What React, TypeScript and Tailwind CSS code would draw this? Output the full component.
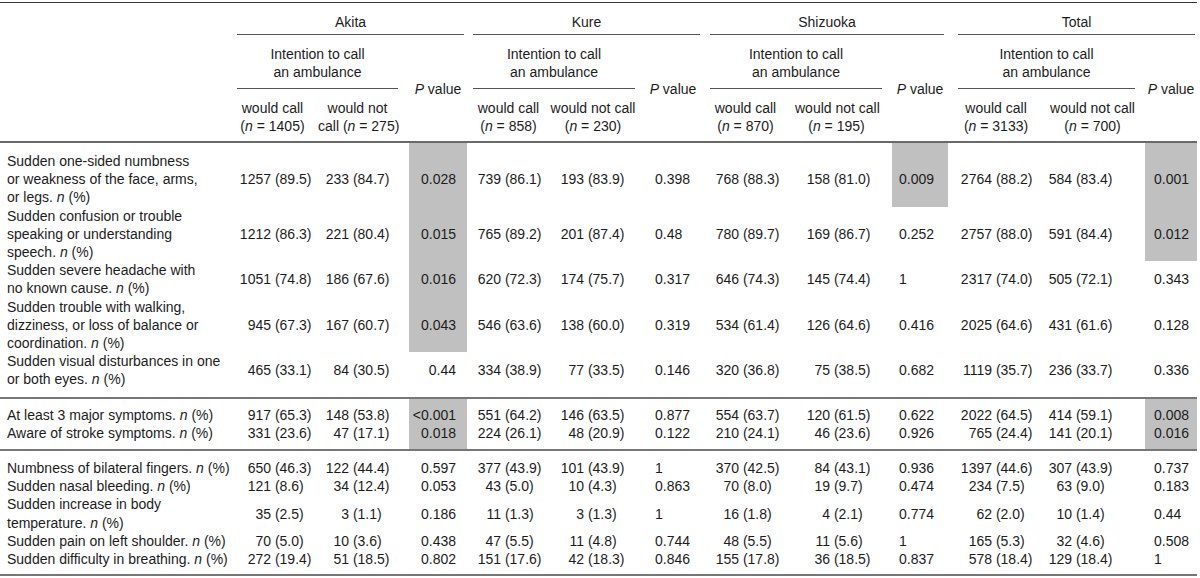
import React from 'react';

type Row = {
  label: React.ReactNode;
  vals: string[];
  shade: [boolean, boolean, boolean]; // Akita, Shizuoka, Total P value
  pt: string;
  pb: string;
  line?: string;
};

const N = () => <i>n</i>;

const ROWS: Row[] = [
  {
    label: (
      <>
        Sudden one-sided numbness
        <br />
        or weakness of the face, arms,
        <br />
        or legs. <N /> (%)
      </>
    ),
    vals: ['1257 (89.5)', '233 (84.7)', '0.028', '739 (86.1)', '193 (83.9)', '0.398', '768 (88.3)', '158 (81.0)', '0.009', '2764 (88.2)', '584 (83.4)', '0.001'],
    shade: [true, true, true],
    pt: 'pt-[9px]',
    pb: 'pb-0',
  },
  {
    label: (
      <>
        Sudden confusion or trouble
        <br />
        speaking or understanding
        <br />
        speech. <N /> (%)
      </>
    ),
    vals: ['1212 (86.3)', '221 (80.4)', '0.015', '765 (89.2)', '201 (87.4)', '0.48', '780 (89.7)', '169 (86.7)', '0.252', '2757 (88.0)', '591 (84.4)', '0.012'],
    shade: [true, false, true],
    pt: 'pt-0',
    pb: 'pb-0',
  },
  {
    label: (
      <>
        Sudden severe headache with
        <br />
        no known cause. <N /> (%)
      </>
    ),
    vals: ['1051 (74.8)', '186 (67.6)', '0.016', '620 (72.3)', '174 (75.7)', '0.317', '646 (74.3)', '145 (74.4)', '1', '2317 (74.0)', '505 (72.1)', '0.343'],
    shade: [true, false, false],
    pt: 'pt-0',
    pb: 'pb-0',
  },
  {
    label: (
      <>
        Sudden trouble with walking,
        <br />
        dizziness, or loss of balance or
        <br />
        coordination. <N /> (%)
      </>
    ),
    vals: ['945 (67.3)', '167 (60.7)', '0.043', '546 (63.6)', '138 (60.0)', '0.319', '534 (61.4)', '126 (64.6)', '0.416', '2025 (64.6)', '431 (61.6)', '0.128'],
    shade: [true, false, false],
    pt: 'pt-0',
    pb: 'pb-0',
  },
  {
    label: (
      <>
        Sudden visual disturbances in one
        <br />
        or both eyes. <N /> (%)
      </>
    ),
    vals: ['465 (33.1)', '84 (30.5)', '0.44', '334 (38.9)', '77 (33.5)', '0.146', '320 (36.8)', '75 (38.5)', '0.682', '1119 (35.7)', '236 (33.7)', '0.336'],
    shade: [false, false, false],
    pt: 'pt-0',
    pb: 'pb-[8px]',
  },
  {
    label: (
      <>
        At least 3 major symptoms. <N /> (%)
      </>
    ),
    vals: ['917 (65.3)', '148 (53.8)', '<0.001', '551 (64.2)', '146 (63.5)', '0.877', '554 (63.7)', '120 (61.5)', '0.622', '2022 (64.5)', '414 (59.1)', '0.008'],
    shade: [true, false, true],
    pt: 'pt-[7px]',
    pb: 'pb-0',
    line: 'border-t-2 border-[#777]',
  },
  {
    label: (
      <>
        Aware of stroke symptoms. <N /> (%)
      </>
    ),
    vals: ['331 (23.6)', '47 (17.1)', '0.018', '224 (26.1)', '48 (20.9)', '0.122', '210 (24.1)', '46 (23.6)', '0.926', '765 (24.4)', '141 (20.1)', '0.016'],
    shade: [true, false, true],
    pt: 'pt-0',
    pb: 'pb-[7px]',
  },
  {
    label: (
      <>
        Numbness of bilateral fingers. <N /> (%)
      </>
    ),
    vals: ['650 (46.3)', '122 (44.4)', '0.597', '377 (43.9)', '101 (43.9)', '1', '370 (42.5)', '84 (43.1)', '0.936', '1397 (44.6)', '307 (43.9)', '0.737'],
    shade: [false, false, false],
    pt: 'pt-[8px]',
    pb: 'pb-0',
    line: 'border-t-2 border-[#777]',
  },
  {
    label: (
      <>
        Sudden nasal bleeding. <N /> (%)
      </>
    ),
    vals: ['121 (8.6)', '34 (12.4)', '0.053', '43 (5.0)', '10 (4.3)', '0.863', '70 (8.0)', '19 (9.7)', '0.474', '234 (7.5)', '63 (9.0)', '0.183'],
    shade: [false, false, false],
    pt: 'pt-0',
    pb: 'pb-0',
  },
  {
    label: (
      <>
        Sudden increase in body
        <br />
        temperature. <N /> (%)
      </>
    ),
    vals: ['35 (2.5)', '3 (1.1)', '0.186', '11 (1.3)', '3 (1.3)', '1', '16 (1.8)', '4 (2.1)', '0.774', '62 (2.0)', '10 (1.4)', '0.44'],
    shade: [false, false, false],
    pt: 'pt-0',
    pb: 'pb-0',
  },
  {
    label: (
      <>
        Sudden pain on left shoulder. <N /> (%)
      </>
    ),
    vals: ['70 (5.0)', '10 (3.6)', '0.438', '47 (5.5)', '11 (4.8)', '0.744', '48 (5.5)', '11 (5.6)', '1', '165 (5.3)', '32 (4.6)', '0.508'],
    shade: [false, false, false],
    pt: 'pt-0',
    pb: 'pb-0',
  },
  {
    label: (
      <>
        Sudden difficulty in breathing. <N /> (%)
      </>
    ),
    vals: ['272 (19.4)', '51 (18.5)', '0.802', '151 (17.6)', '42 (18.3)', '0.846', '155 (17.8)', '36 (18.5)', '0.837', '578 (18.4)', '129 (18.4)', '1'],
    shade: [false, false, false],
    pt: 'pt-0',
    pb: 'pb-[6px]',
    line: 'border-b-2 border-[#777]',
  },
];

// per data column: padding, width of the count box, P column flag
const COLS = [
  { pl: 'pl-[2px]', pr: 'pr-0', cw: 'w-[32px]', p: false, align: 'text-left', shadeIdx: -1 },
  { pl: 'pl-[7px]', pr: 'pr-0', cw: 'w-[24px]', p: false, align: 'text-left', shadeIdx: -1 },
  { pl: 'pl-0', pr: 'pr-[11px]', cw: '', p: true, align: 'text-right', shadeIdx: 0 },
  { pl: 'pl-[10px]', pr: 'pr-0', cw: 'w-[24px]', p: false, align: 'text-left', shadeIdx: -1 },
  { pl: 'pl-[10px]', pr: 'pr-0', cw: 'w-[24px]', p: false, align: 'text-left', shadeIdx: -1 },
  { pl: 'pl-[15px]', pr: 'pr-0', cw: '', p: true, align: 'text-left', shadeIdx: -1 },
  { pl: 'pl-[9px]', pr: 'pr-0', cw: 'w-[24px]', p: false, align: 'text-left', shadeIdx: -1 },
  { pl: 'pl-[11px]', pr: 'pr-0', cw: 'w-[24px]', p: false, align: 'text-left', shadeIdx: -1 },
  { pl: 'pl-[7px]', pr: 'pr-0', cw: '', p: true, align: 'text-left', shadeIdx: 1 },
  { pl: 'pl-[12px]', pr: 'pr-0', cw: 'w-[32px]', p: false, align: 'text-left', shadeIdx: -1 },
  { pl: 'pl-[8px]', pr: 'pr-0', cw: 'w-[24px]', p: false, align: 'text-left', shadeIdx: -1 },
  { pl: 'pl-[9px]', pr: 'pr-0', cw: '', p: true, align: 'text-left', shadeIdx: 2 },
];

const SITES = [
  {
    name: 'Akita',
    siteM: 'ml-0 mr-[3px]',
    intM: 'ml-0 mr-[11px]',
    wc: { n: '1405', cls: 'pl-0 pr-[10px]' },
    wnc: { n: '275', cls: 'pl-0 pr-[12px]', split: true },
  },
  {
    name: 'Kure',
    siteM: 'ml-[6px] mr-[6px]',
    intM: 'ml-[6px] mr-[5px]',
    wc: { n: '858', cls: 'pl-0 pr-0' },
    wnc: { n: '230', cls: 'pl-0 pr-[4px]', split: false },
  },
  {
    name: 'Shizuoka',
    siteM: 'ml-[4px] mr-[4px]',
    intM: 'ml-[4px] mr-[10px]',
    wc: { n: '870', cls: 'pl-0 pr-[10px]' },
    wnc: { n: '195', cls: 'pl-0 pr-[14px]', split: false },
  },
  {
    name: 'Total',
    siteM: 'ml-[10px] mr-[2px]',
    intM: 'ml-[10px] mr-[10px]',
    wc: { n: '3133', cls: 'pl-[4px] pr-0' },
    wnc: { n: '700', cls: 'pl-0 pr-0', split: false },
  },
];

const WIDTHS = ['w-[237px]', 'w-[81px]', 'w-[91px]', 'w-[58px]', 'w-[83px]', 'w-[90px]', 'w-[66px]', 'w-[89px]', 'w-[97px]', 'w-[56px]', 'w-[92px]', 'w-[105px]', 'w-[52px]'];

function Count({ v, cw }: { v: string; cw: string }) {
  const i = v.indexOf(' (');
  return (
    <>
      <span className={`inline-block text-right ${cw}`}>{v.slice(0, i)}</span>
      {' '}
      {v.slice(i + 1)}
    </>
  );
}

export default function App() {
  return (
    <div className="w-[1200px] h-[578px] bg-white overflow-hidden pt-[2px] font-['Liberation_Sans',Arial,sans-serif] text-[14px] leading-[18.2px] text-[#1c1c1c]">
      <table className="table-fixed border-collapse w-[1197px] border-t border-[#3a3a3a]">
        <colgroup>
          {WIDTHS.map((w, i) => (
            <col key={i} className={w} />
          ))}
        </colgroup>
        <thead>
          <tr>
            <th rowSpan={3} className="pt-0 pb-0 pl-0 pr-0 border-b-2 border-[#6a6a6a]" />
            {SITES.map((s) => (
              <th key={s.name} colSpan={3} className="pt-0 pb-0 pl-0 pr-0 font-normal align-bottom">
                <div className={`pt-[10px] pb-[3px] border-b border-[#555] text-center ${s.siteM}`}>{s.name}</div>
              </th>
            ))}
          </tr>
          <tr>
            {SITES.map((s) => (
              <React.Fragment key={s.name}>
                <th colSpan={2} className="pt-0 pb-0 pl-0 pr-0 font-normal align-bottom">
                  <div className={`pt-[10px] pb-[6px] border-b border-[#555] text-center ${s.intM}`}>
                    Intention to call
                    <br />
                    an ambulance
                  </div>
                </th>
                <th
                  rowSpan={2}
                  className="pt-[2px] pb-0 pl-0 pr-0 font-normal text-center align-middle whitespace-nowrap border-b-2 border-[#6a6a6a]"
                >
                  <i>P</i> value
                </th>
              </React.Fragment>
            ))}
          </tr>
          <tr>
            {SITES.map((s) => (
              <React.Fragment key={s.name}>
                <th className={`pt-[10px] pb-[6px] font-normal text-center whitespace-nowrap border-b-2 border-[#6a6a6a] ${s.wc.cls}`}>
                  would call
                  <br />(<i>n</i> = {s.wc.n})
                </th>
                <th className={`pt-[10px] pb-[6px] font-normal text-center whitespace-nowrap border-b-2 border-[#6a6a6a] ${s.wnc.cls}`}>
                  {s.wnc.split ? (
                    <>
                      would not
                      <br />
                      call (<i>n</i> = {s.wnc.n})
                    </>
                  ) : (
                    <>
                      would not call
                      <br />(<i>n</i> = {s.wnc.n})
                    </>
                  )}
                </th>
              </React.Fragment>
            ))}
          </tr>
        </thead>
        <tbody>
          {ROWS.map((r, ri) => (
            <tr key={ri} className={r.line ?? ''}>
              <td className={`pl-[7px] pr-0 ${r.pt} ${r.pb} align-middle text-left whitespace-nowrap`}>{r.label}</td>
              {r.vals.map((v, ci) => {
                const c = COLS[ci];
                const shaded = c.shadeIdx >= 0 && r.shade[c.shadeIdx];
                return (
                  <td
                    key={ci}
                    className={`${c.pl} ${c.pr} ${r.pt} ${r.pb} ${c.align} align-middle whitespace-nowrap ${shaded ? 'bg-[#c0c0c0]' : ''}`}
                  >
                    {c.p ? v : <Count v={v} cw={c.cw} />}
                  </td>
                );
              })}
            </tr>
          ))}
        </tbody>
      </table>
    </div>
  );
}
